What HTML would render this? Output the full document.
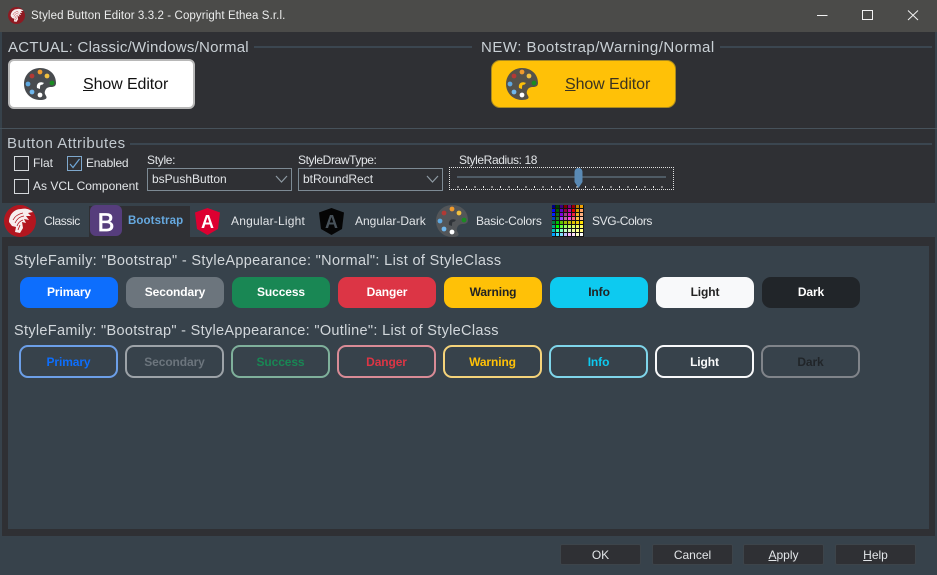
<!DOCTYPE html>
<html><head><meta charset="utf-8"><style>
*{box-sizing:border-box}
html,body{margin:0;padding:0;width:937px;height:575px;overflow:hidden;background:#37424b}
body{position:relative;font-family:"Liberation Sans",sans-serif;color:#dfe3e6}
.a{position:absolute;white-space:nowrap}
.t{font-size:12px;line-height:15px;color:#e2e5e8}
.h{font-size:15px;letter-spacing:.25px;line-height:18px;color:#c9d0d5}
.ln{position:absolute;height:2px;background:#3b4650}
.cb{position:absolute;width:15px;height:15px;border:1px solid #d5d8db}
.combo{position:absolute;height:23px;border:1px solid #7d8a94;background:#2f3034;font-size:12px;line-height:21px;padding-left:4px;color:#e2e5e8}
.b{position:absolute;width:98px;height:31px;border-radius:9px;text-align:center;font-weight:bold;font-size:12px;line-height:30px;letter-spacing:-.1px}
.o{width:99px;height:33px;top:345px;border:2px solid;background:transparent;line-height:30px}
.f{position:absolute;top:544px;width:81px;height:21px;background:#2f3034;border:1px solid #3d444a;border-radius:2px;text-align:center;font-size:12px;line-height:21px;color:#e2e5e8}
</style></head><body>
<svg width="0" height="0" style="position:absolute"><defs>
<path id="pal" d="M16 0C7 0 0 7 0 16C0 25 7 32 16 32C20 32 23 31 22.500 29C22 27 20 26 21 23C22 20 24 19 27 19C30 19 32 18 32 15C32 6 25 0 16 0Z"/>
<g id="helm"><path d="M5 17C5 10 10 4 17 4C21 3 26 4 29 7L24 8L27 11L22 11L25 15L20 14L22 18L18 17L19 23L16 28L11 27L12 22L8 21Z" fill="#f7eeee"/><path d="M9 15C11 11 14 9 19 8M11 18C13 14 15 12 20 11M13 21C14 18 16 16 19 15M14 25L16 20" fill="none" stroke="#b3161f" stroke-width=".8"/></g>
</defs></svg>

<!-- title bar -->
<div class="a" style="left:0;top:0;width:937px;height:32px;background:#4b4b49"></div>
<svg class="a" style="left:8px;top:7px" width="17" height="17" viewBox="0 0 32 32"><circle cx="16" cy="16" r="16" fill="#8e1a22"/><use href="#helm"/></svg>
<div class="a t" style="left:31px;top:9px;font-size:11.500px;letter-spacing:.1px;color:#eceded">Styled Button Editor 3.3.2 - Copyright Ethea S.r.l.</div>
<svg class="a" style="left:800px;top:0" width="137" height="32" fill="none" stroke="#f2f2f2" stroke-width="1"><path d="M17 15.500H27.500M62.500 10.500H72.500V19.500H62.500ZM108 10.500L118 20M118 10.500L108 20"/></svg>

<!-- header panel -->
<div class="a" style="left:2px;top:32px;width:933px;height:96px;background:#2f3034"></div>
<div class="a" style="left:0;top:128px;width:937px;height:1px;background:#47525b"></div>
<div class="a h" style="left:8px;top:39px">ACTUAL: Classic/Windows/Normal</div>
<div class="ln" style="left:254px;top:46px;width:218px"></div>
<div class="a h" style="left:481px;top:39px;letter-spacing:.5px">NEW: Bootstrap/Warning/Normal</div>
<div class="ln" style="left:720px;top:46px;width:212px"></div>

<div class="a" style="left:8px;top:59px;width:187px;height:50px;background:#fff;border:2px solid #b8b8b8;border-radius:6px"></div>
<svg class="a" style="left:24px;top:68px" width="32" height="32" viewBox="0 0 32 32"><use href="#pal" fill="#484b4f"/><circle cx="8" cy="8" r="2.400" fill="#b23a35"/><circle cx="16" cy="4" r="2.400" fill="#f09a2c"/><circle cx="23" cy="8" r="2.400" fill="#f0c040"/><circle cx="28" cy="15" r="2.400" fill="#1a8a22"/><circle cx="4" cy="16" r="2.400" fill="#5fa8e0"/><circle cx="8" cy="24" r="2.400" fill="#70b8ee"/><circle cx="16" cy="27" r="2.400" fill="#fff"/><path d="M13 20C12 15 16 13 20 15L18 17C16 16 16 19 16 21Z" fill="#fff"/></svg>
<div class="a" style="left:83px;top:75px;font-size:16px;line-height:19px;color:#111;letter-spacing:-.1px"><u>S</u>how Editor</div>

<div class="a" style="left:491px;top:60px;width:185px;height:48px;background:#ffc107;border:1px solid #a98a20;border-radius:9px"></div>
<svg class="a" style="left:506px;top:68px" width="32" height="32" viewBox="0 0 32 32"><use href="#pal" fill="#55524a"/><circle cx="8" cy="8" r="2.400" fill="#b23a35"/><circle cx="16" cy="4" r="2.400" fill="#f09a2c"/><circle cx="23" cy="8" r="2.400" fill="#f0c040"/><circle cx="28" cy="15" r="2.400" fill="#1a8a22"/><circle cx="4" cy="16" r="2.400" fill="#5fa8e0"/><circle cx="8" cy="24" r="2.400" fill="#70b8ee"/><circle cx="16" cy="27" r="2.400" fill="#fff"/><path d="M13 20C12 15 16 13 20 15L18 17C16 16 16 19 16 21Z" fill="#ffc107"/></svg>
<div class="a" style="left:565px;top:75px;font-size:16px;line-height:19px;color:#3b3320;letter-spacing:-.1px"><u>S</u>how Editor</div>

<!-- attributes -->
<div class="a" style="left:2px;top:129px;width:933px;height:74px;background:#2f3034"></div>
<div class="a h" style="left:7px;top:135px;letter-spacing:.5px;color:#c3cad0">Button Attributes</div>
<div class="ln" style="left:130px;top:143px;width:802px"></div>
<div class="cb" style="left:14px;top:156px"></div>
<div class="a t" style="left:33px;top:156px">Flat</div>
<div class="cb" style="left:67px;top:156px;border-color:#7fa8cc"></div>
<svg class="a" style="left:67px;top:156px" width="15" height="15" fill="none" stroke="#6fa6d6" stroke-width="1.200"><path d="M3 8L6 11.500L12.500 3"/></svg>
<div class="a t" style="left:86px;top:156px;letter-spacing:-.25px">Enabled</div>
<div class="cb" style="left:14px;top:179px"></div>
<div class="a t" style="left:33px;top:179px">As VCL Component</div>
<div class="a t" style="left:147px;top:153px;letter-spacing:-.3px">Style:</div>
<div class="combo" style="left:147px;top:168px;width:145px">bsPushButton</div>
<svg class="a" style="left:275px;top:175px" width="13" height="9" fill="none" stroke="#8e9aa3" stroke-width="1.200"><path d="M1 1L6.500 7L12 1"/></svg>
<div class="a t" style="left:298px;top:153px;letter-spacing:-.4px">StyleDrawType:</div>
<div class="combo" style="left:298px;top:168px;width:145px">btRoundRect</div>
<svg class="a" style="left:426px;top:175px" width="13" height="9" fill="none" stroke="#8e9aa3" stroke-width="1.200"><path d="M1 1L6.500 7L12 1"/></svg>
<div class="a" style="left:449px;top:167px;width:225px;height:23px;border:1px dotted #e0e0e0"></div>
<div class="a t" style="left:459px;top:153px;letter-spacing:-.4px">StyleRadius: 18</div>
<div class="a" style="left:457px;top:176px;width:209px;height:2px;background:#4f5b65"></div>
<svg class="a" style="left:457px;top:185px" width="209" height="4" stroke="#dcdcdc" stroke-width="1"><path d="M1 1V3M9.500 1V3M18 1V3M26.500 1V3M35 1V3M43.500 1V3M52 1V3M60.500 1V3M69 1V3M77.500 1V3M86 1V3M94.500 1V3M103 1V3M111.500 1V3M120 1V3M128.500 1V3M137 1V3M145.500 1V3M154 1V3M162.500 1V3M171 1V3M179.500 1V3M188 1V3M196.500 1V3M205 1V3"/></svg>
<svg class="a" style="left:574px;top:168px" width="10" height="21"><path d="M0.500 4C0.500 1.500 2.500 0 4.500 0C6.500 0 8.500 1.500 8.500 4V14L4.500 20L0.500 14Z" fill="#5a8ab5"/></svg>

<!-- tabs -->
<div class="a" style="left:89px;top:206px;width:101px;height:31px;background:#2f3034"></div>
<svg class="a" style="left:4px;top:205px" width="32" height="32" viewBox="0 0 32 32"><circle cx="16" cy="16" r="16" fill="#b3161f"/><use href="#helm"/></svg>
<div class="a t" style="left:44px;top:214px;letter-spacing:-.4px">Classic</div>
<svg class="a" style="left:90px;top:205px" width="32" height="31"><rect width="32" height="31" rx="6" fill="#563d7c"/><text x="16" y="26" text-anchor="middle" font-family="Liberation Sans" font-size="25" stroke="#fff" stroke-width=".7" fill="#fff">B</text></svg>
<div class="a t" style="left:128px;top:214px;color:#66a9e0;font-weight:bold;font-size:11.500px;letter-spacing:.1px">Bootstrap</div>
<svg class="a" style="left:195px;top:208px" width="25" height="27" viewBox="0 0 25 27"><path d="M12.500 0L0 4.500L2 21L12.500 27L23 21L25 4.500Z" fill="#dd0031"/><text x="12.500" y="20" text-anchor="middle" font-family="Liberation Sans" font-weight="bold" font-size="18" fill="#fff">A</text></svg>
<div class="a t" style="left:231px;top:214px;letter-spacing:.2px">Angular-Light</div>
<svg class="a" style="left:319px;top:208px" width="25" height="27" viewBox="0 0 25 27"><path d="M12.500 0L0 4.500L2 21L12.500 27L23 21L25 4.500Z" fill="#050505"/><text x="12.500" y="20" text-anchor="middle" font-family="Liberation Sans" font-weight="bold" font-size="18" fill="#48525a">A</text></svg>
<div class="a t" style="left:355px;top:214px">Angular-Dark</div>
<svg class="a" style="left:436px;top:205px" width="32" height="32" viewBox="0 0 32 32"><use href="#pal" fill="#535659"/><circle cx="8" cy="8" r="2.400" fill="#b23a35"/><circle cx="16" cy="4" r="2.400" fill="#f09a2c"/><circle cx="23" cy="8" r="2.400" fill="#f0c040"/><circle cx="28" cy="15" r="2.400" fill="#1a8a22"/><circle cx="4" cy="16" r="2.400" fill="#5fa8e0"/><circle cx="8" cy="24" r="2.400" fill="#70b8ee"/><circle cx="16" cy="27" r="2.400" fill="#fff"/><path d="M13 20C12 15 16 13 20 15L18 17C16 16 16 19 16 21Z" fill="#2f3338"/></svg>
<div class="a t" style="left:476px;top:214px;letter-spacing:-.2px">Basic-Colors</div>
<svg class="a" style="left:552px;top:205px" width="32" height="32"><rect width="32" height="32" fill="#141414"/>
<g id="r0"><rect x="0" y="0" width="3" height="3" fill="#000080"/><rect x="4" y="0" width="3" height="3" fill="#004000"/><rect x="8" y="0" width="3" height="3" fill="#400080"/><rect x="12" y="0" width="3" height="3" fill="#800000"/><rect x="16" y="0" width="3" height="3" fill="#800080"/><rect x="20" y="0" width="3" height="3" fill="#a00000"/><rect x="24" y="0" width="3" height="3" fill="#c08000"/><rect x="28" y="0" width="3" height="3" fill="#f0a000"/></g>
<g transform="translate(0,4)"><rect x="0" width="3" height="3" fill="#0000ff"/><rect x="4" width="3" height="3" fill="#006000"/><rect x="8" width="3" height="3" fill="#6000c0"/><rect x="12" width="3" height="3" fill="#900040"/><rect x="16" width="3" height="3" fill="#c000a0"/><rect x="20" width="3" height="3" fill="#e00000"/><rect x="24" width="3" height="3" fill="#e0a000"/><rect x="28" width="3" height="3" fill="#ffa060"/></g>
<g transform="translate(0,8)"><rect x="0" width="3" height="3" fill="#0020ff"/><rect x="4" width="3" height="3" fill="#107010"/><rect x="8" width="3" height="3" fill="#8000e0"/><rect x="12" width="3" height="3" fill="#a04080"/><rect x="16" width="3" height="3" fill="#e000c0"/><rect x="20" width="3" height="3" fill="#f02040"/><rect x="24" width="3" height="3" fill="#f0b020"/><rect x="28" width="3" height="3" fill="#ffb080"/></g>
<g transform="translate(0,12)"><rect x="0" width="3" height="3" fill="#0040c0"/><rect x="4" width="3" height="3" fill="#208020"/><rect x="8" width="3" height="3" fill="#a040ff"/><rect x="12" width="3" height="3" fill="#c060a0"/><rect x="16" width="3" height="3" fill="#ff40e0"/><rect x="20" width="3" height="3" fill="#ff6080"/><rect x="24" width="3" height="3" fill="#ffc040"/><rect x="28" width="3" height="3" fill="#ffc0a0"/></g>
<g transform="translate(0,16)"><rect x="0" width="3" height="3" fill="#008040"/><rect x="4" width="3" height="3" fill="#00c000"/><rect x="8" width="3" height="3" fill="#60c000"/><rect x="12" width="3" height="3" fill="#a0c000"/><rect x="16" width="3" height="3" fill="#c0c000"/><rect x="20" width="3" height="3" fill="#e0c000"/><rect x="24" width="3" height="3" fill="#f0d000"/><rect x="28" width="3" height="3" fill="#ffe000"/></g>
<g transform="translate(0,20)"><rect x="0" width="3" height="3" fill="#00a080"/><rect x="4" width="3" height="3" fill="#00ff00"/><rect x="8" width="3" height="3" fill="#60ff40"/><rect x="12" width="3" height="3" fill="#a0ff60"/><rect x="16" width="3" height="3" fill="#c0ff60"/><rect x="20" width="3" height="3" fill="#e0ff60"/><rect x="24" width="3" height="3" fill="#f0ff60"/><rect x="28" width="3" height="3" fill="#ffff60"/></g>
<g transform="translate(0,24)"><rect x="0" width="3" height="3" fill="#00c0c0"/><rect x="4" width="3" height="3" fill="#40ffa0"/><rect x="8" width="3" height="3" fill="#80ffc0"/><rect x="12" width="3" height="3" fill="#c0ffc0"/><rect x="16" width="3" height="3" fill="#e0ffc0"/><rect x="20" width="3" height="3" fill="#f0ffa0"/><rect x="24" width="3" height="3" fill="#ffff90"/><rect x="28" width="3" height="3" fill="#ffff80"/></g>
<g transform="translate(0,28)"><rect x="0" width="3" height="3" fill="#00a0ff"/><rect x="4" width="3" height="3" fill="#40e0ff"/><rect x="8" width="3" height="3" fill="#80e0ff"/><rect x="12" width="3" height="3" fill="#c0c0ff"/><rect x="16" width="3" height="3" fill="#ffc0ff"/><rect x="20" width="3" height="3" fill="#ffe0ff"/><rect x="24" width="3" height="3" fill="#ffffc0"/><rect x="28" width="3" height="3" fill="#ffffff"/></g>
</svg>
<div class="a t" style="left:592px;top:214px;letter-spacing:-.4px">SVG-Colors</div>

<!-- page -->
<div class="a" style="left:2px;top:237px;width:933px;height:299px;background:#2f3034"></div>
<div class="a" style="left:8px;top:246px;width:921px;height:283px;background:#37424b"></div>
<div class="a h" style="left:14px;top:252px;font-size:14.500px;letter-spacing:.34px;color:#d2d7db">StyleFamily: "Bootstrap" - StyleAppearance: "Normal": List of StyleClass</div>
<div class="b" style="left:20px;top:277px;background:#0d6efd;color:#fff">Primary</div>
<div class="b" style="left:126px;top:277px;background:#6c757d;color:#fff">Secondary</div>
<div class="b" style="left:232px;top:277px;background:#198754;color:#fff">Success</div>
<div class="b" style="left:338px;top:277px;background:#dc3545;color:#fff">Danger</div>
<div class="b" style="left:444px;top:277px;background:#ffc107;color:#222">Warning</div>
<div class="b" style="left:550px;top:277px;background:#0dcaf0;color:#222">Info</div>
<div class="b" style="left:656px;top:277px;background:#f8f9fa;color:#222">Light</div>
<div class="b" style="left:762px;top:277px;background:#212529;color:#fff">Dark</div>

<div class="a h" style="left:14px;top:322px;font-size:14.500px;letter-spacing:.31px;color:#d2d7db">StyleFamily: "Bootstrap" - StyleAppearance: "Outline": List of StyleClass</div>
<div class="b o" style="left:19px;border-color:#6c9fe8;color:#0d6efd">Primary</div>
<div class="b o" style="left:125px;border-color:#9da3a8;color:#6c757d">Secondary</div>
<div class="b o" style="left:231px;border-color:#7fb09b;color:#198754">Success</div>
<div class="b o" style="left:337px;border-color:#d98b96;color:#dc3545">Danger</div>
<div class="b o" style="left:443px;border-color:#f5d37a;color:#ffc107">Warning</div>
<div class="b o" style="left:549px;border-color:#7fd5ea;color:#0dcaf0">Info</div>
<div class="b o" style="left:655px;border-color:#f8f9fa;color:#f8f9fa">Light</div>
<div class="b o" style="left:761px;border-color:#80848a;color:#212529">Dark</div>

<!-- footer -->
<div class="f" style="left:560px">OK</div>
<div class="f" style="left:652px">Cancel</div>
<div class="f" style="left:743px"><u>A</u>pply</div>
<div class="f" style="left:835px"><u>H</u>elp</div>
</body></html>
